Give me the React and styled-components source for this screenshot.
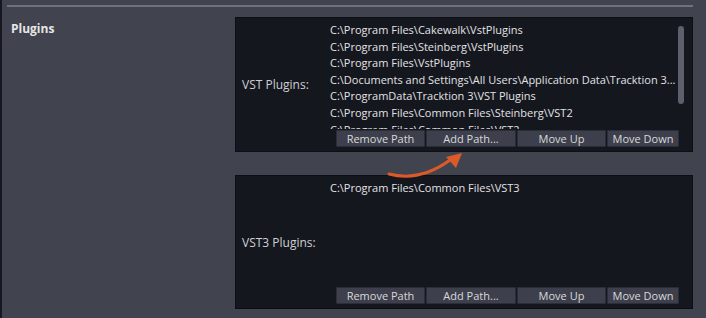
import React from 'react';
import styled, { createGlobalStyle } from 'styled-components';

const GlobalStyle = createGlobalStyle`
  html, body {
    margin: 0;
    padding: 0;
    background: #41434e;
    font-family: 'Open Sans', 'Noto Sans', sans-serif;
  }
`;

const Page = styled.div`
  width: 706px;
  height: 318px;
  box-sizing: border-box;
  border-left: 2px solid #17181f;
  background: #41434e;
  padding: 5px 13px 0 5px;
  position: relative;
  overflow: hidden;
`;

const Divider = styled.div`
  height: 2px;
  background: #6f727d;
  margin-bottom: 10px;
`;

const Section = styled.div`
  display: flex;
`;

const SectionTitle = styled.div`
  width: 224px;
  padding: 3px 0 0 4px;
  font-size: 12px;
  font-weight: 700;
  color: #e6e6e6;
`;

const Panels = styled.div`
  flex: 1;
  display: flex;
  flex-direction: column;
  gap: 23px;
`;

const Panel = styled.div`
  height: ${p => p.h}px;
  box-sizing: border-box;
  background: #15171f;
  border: 1px solid #0e0f14;
  display: grid;
  grid-template-columns: 94px 1fr;
  grid-template-rows: 1fr auto;
  padding: 4px 0 4px 0;
`;

const PanelLabel = styled.div`
  grid-row: 1 / span 2;
  display: flex;
  align-items: center;
  padding-left: 6px;
  font-size: 12px;
  color: #cfcfd2;
`;

const ListArea = styled.div`
  display: flex;
  overflow: hidden;
  min-height: 0;
`;

const Lines = styled.div`
  flex: 1;
  min-width: 0;
`;

const Line = styled.div`
  font-size: 11px;
  line-height: 16.6px;
  color: #e2e2e4;
  white-space: nowrap;
`;

const Scrollbar = styled.div`
  width: 6px;
  height: 78px;
  margin: 4px 8px 0 2px;
  border-radius: 3px;
  background: #5d606c;
  visibility: ${p => (p.show ? 'visible' : 'hidden')};
`;

const ButtonRow = styled.div`
  display: flex;
  gap: 1px;
  margin-left: 6px;
  margin-top: 1px;
`;

const Button = styled.div`
  width: ${p => p.w}px;
  height: 17px;
  box-sizing: border-box;
  background: #3d404c;
  border: 1px solid #2b2d37;
  border-radius: 1px;
  color: #d8d8da;
  font-size: 11px;
  display: flex;
  align-items: center;
  justify-content: center;
`;

const Arrow = styled.svg`
  position: absolute;
  left: 380px;
  top: 146px;
`;

const vstPaths = [
  'C:\\Program Files\\Cakewalk\\VstPlugins',
  'C:\\Program Files\\Steinberg\\VstPlugins',
  'C:\\Program Files\\VstPlugins',
  'C:\\Documents and Settings\\All Users\\Application Data\\Tracktion 3...',
  'C:\\ProgramData\\Tracktion 3\\VST Plugins',
  'C:\\Program Files\\Common Files\\Steinberg\\VST2',
  'C:\\Program Files\\Common Files\\VST2',
];

const vst3Paths = ['C:\\Program Files\\Common Files\\VST3'];

const buttons = [
  ['Remove Path', 89],
  ['Add Path...', 90],
  ['Move Up', 89],
  ['Move Down', 72],
];

const PathPanel = ({ label, paths, height, scroll }) => (
  <Panel h={height}>
    <PanelLabel>{label}</PanelLabel>
    <ListArea>
      <Lines>
        {paths.map(p => (
          <Line key={p}>{p}</Line>
        ))}
      </Lines>
      <Scrollbar show={scroll} />
    </ListArea>
    <ButtonRow>
      {buttons.map(([text, w]) => (
        <Button key={text} w={w}>{text}</Button>
      ))}
    </ButtonRow>
  </Panel>
);

export default function App() {
  return (
    <>
      <GlobalStyle />
      <Page>
        <Divider />
        <Section>
          <SectionTitle>Plugins</SectionTitle>
          <Panels>
            <PathPanel label="VST Plugins:" paths={vstPaths} height={135} scroll />
            <PathPanel label="VST3 Plugins:" paths={vst3Paths} height={134} />
          </Panels>
        </Section>
        {/* annotation arrow pointing at Add Path */}
        <Arrow width="90" height="36" viewBox="0 0 90 36">
          <path d="M7 28 Q 38 36 68 14" fill="none" stroke="#db5a28" strokeWidth="3" strokeLinecap="round" />
          <polygon points="80,7 64,11 74,22" fill="#db5a28" />
        </Arrow>
      </Page>
    </>
  );
}
